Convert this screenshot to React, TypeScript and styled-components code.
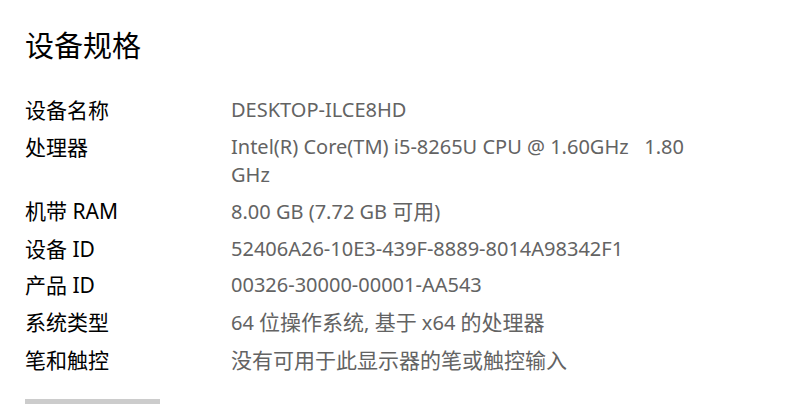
import { Fragment } from "react";
import styled, { createGlobalStyle } from "styled-components";

const GlobalStyle = createGlobalStyle`
  html, body {
    margin: 0;
    padding: 0;
    background: #ffffff;
  }
  body {
    font-family: "Noto Sans", "Noto Sans CJK SC", sans-serif;
    overflow: hidden;
  }
`;

const Page = styled.div`
  width: 790px;
  height: 404px;
  box-sizing: border-box;
  padding: 26px 25px 0;
  display: flex;
  flex-direction: column;
  overflow: hidden;
`;

const Title = styled.h1`
  margin: 0;
  font-size: 29px;
  font-weight: 400;
  line-height: 40px;
  color: #000;
`;

const SpecList = styled.dl`
  margin: 30px 0 0;
  display: grid;
  grid-template-columns: 206px 470px;
  row-gap: 8.6px;
`;

const Label = styled.dt`
  margin: 0;
  font-size: 21px;
  line-height: 28px;
  color: #000;
`;

const Value = styled.dd`
  margin: 0;
  font-size: 20px;
  line-height: 28px;
  color: #636363;
  white-space: pre-wrap;
`;

// 한자 부분만 조금 크게
const Cjk = styled.span`
  font-size: 21px;
`;

const CopyButton = styled.button`
  margin-top: 24px;
  width: 135px;
  height: 40px;
  border: none;
  padding: 0;
  background: #cccccc;
  flex-shrink: 0;
`;

const specs = [
  { label: "设备名称", value: "DESKTOP-ILCE8HD" },
  { label: "处理器", value: "Intel(R) Core(TM) i5-8265U CPU @ 1.60GHz   1.80 GHz" },
  { label: "机带 RAM", value: "8.00 GB (7.72 GB 可用)" },
  { label: "设备 ID", value: "52406A26-10E3-439F-8889-8014A98342F1" },
  { label: "产品 ID", value: "00326-30000-00001-AA543" },
  { label: "系统类型", value: "64 位操作系统, 基于 x64 的处理器" },
  { label: "笔和触控", value: "没有可用于此显示器的笔或触控输入" },
];

function renderValue(text: string) {
  return text
    .split(/([\u4e00-\u9fff]+)/)
    .filter((part) => part !== "")
    .map((part, i) =>
      /[\u4e00-\u9fff]/.test(part) ? <Cjk key={i}>{part}</Cjk> : <Fragment key={i}>{part}</Fragment>
    );
}

export default function App() {
  return (
    <Page>
      <GlobalStyle />
      <Title>设备规格</Title>
      <SpecList>
        {specs.map((s) => (
          <Fragment key={s.label}>
            <Label>{s.label}</Label>
            <Value>{renderValue(s.value)}</Value>
          </Fragment>
        ))}
      </SpecList>
      <CopyButton aria-label="复制" />
    </Page>
  );
}
